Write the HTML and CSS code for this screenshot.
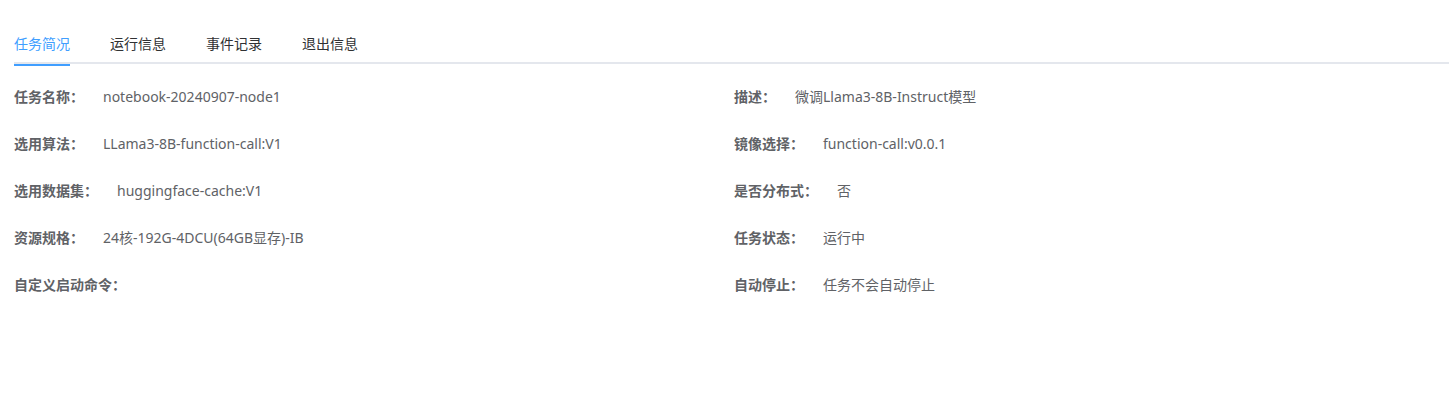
FILE: index.html
```html
<!DOCTYPE html>
<html lang="zh-CN">
<head>
    <meta charset="UTF-8">
    <title>任务详情</title>
    <link rel="stylesheet" href="styles.css">
</head>
<body>
    <div class="page">
        <div class="tabs">
            <div class="tab active">任务简况</div>
            <div class="tab">运行信息</div>
            <div class="tab">事件记录</div>
            <div class="tab">退出信息</div>
        </div>

        <div class="info-grid">
            <div class="info-item"><span class="label">任务名称：</span><span class="value">notebook-20240907-node1</span></div>
            <div class="info-item"><span class="label">描述：</span><span class="value">微调Llama3-8B-Instruct模型</span></div>
            <div class="info-item"><span class="label">选用算法：</span><span class="value">LLama3-8B-function-call:V1</span></div>
            <div class="info-item"><span class="label">镜像选择：</span><span class="value">function-call:v0.0.1</span></div>
            <div class="info-item"><span class="label">选用数据集：</span><span class="value">huggingface-cache:V1</span></div>
            <div class="info-item"><span class="label">是否分布式：</span><span class="value">否</span></div>
            <div class="info-item"><span class="label">资源规格：</span><span class="value">24核-192G-4DCU(64GB显存)-IB</span></div>
            <div class="info-item"><span class="label">任务状态：</span><span class="value">运行中</span></div>
            <div class="info-item"><span class="label">自定义启动命令：</span><span class="value"></span></div>
            <div class="info-item"><span class="label">自动停止：</span><span class="value">任务不会自动停止</span></div>
        </div>
    </div>
</body>
</html>
```

FILE: styles.css
```css
* {
    margin: 0;
    padding: 0;
    box-sizing: border-box;
}

body {
    background: #ffffff;
    font-family: "Noto Sans", "Noto Sans CJK SC", sans-serif;
    font-size: 14px;
    color: #606266;
}

.page {
    padding: 24px 0 0 14px;
}

.tabs {
    display: flex;
    gap: 40px;
    height: 40px;
    border-bottom: 2px solid #e4e7ed;
}

.tab {
    line-height: 40px;
    height: 40px;
    color: #303133;
    white-space: nowrap;
}

.tab.active {
    color: #409eff;
    box-shadow: inset 0 -2px 0 #409eff;
    height: 42px;
}

.info-grid {
    display: grid;
    grid-template-columns: 720px 1fr;
    row-gap: 27px;
    padding-top: 22px;
}

.info-item {
    display: flex;
    align-items: center;
    height: 20px;
    white-space: nowrap;
}

.label {
    font-weight: 700;
    color: #606266;
    margin-right: 19px;
}

.value {
    color: #606266;
}
```
